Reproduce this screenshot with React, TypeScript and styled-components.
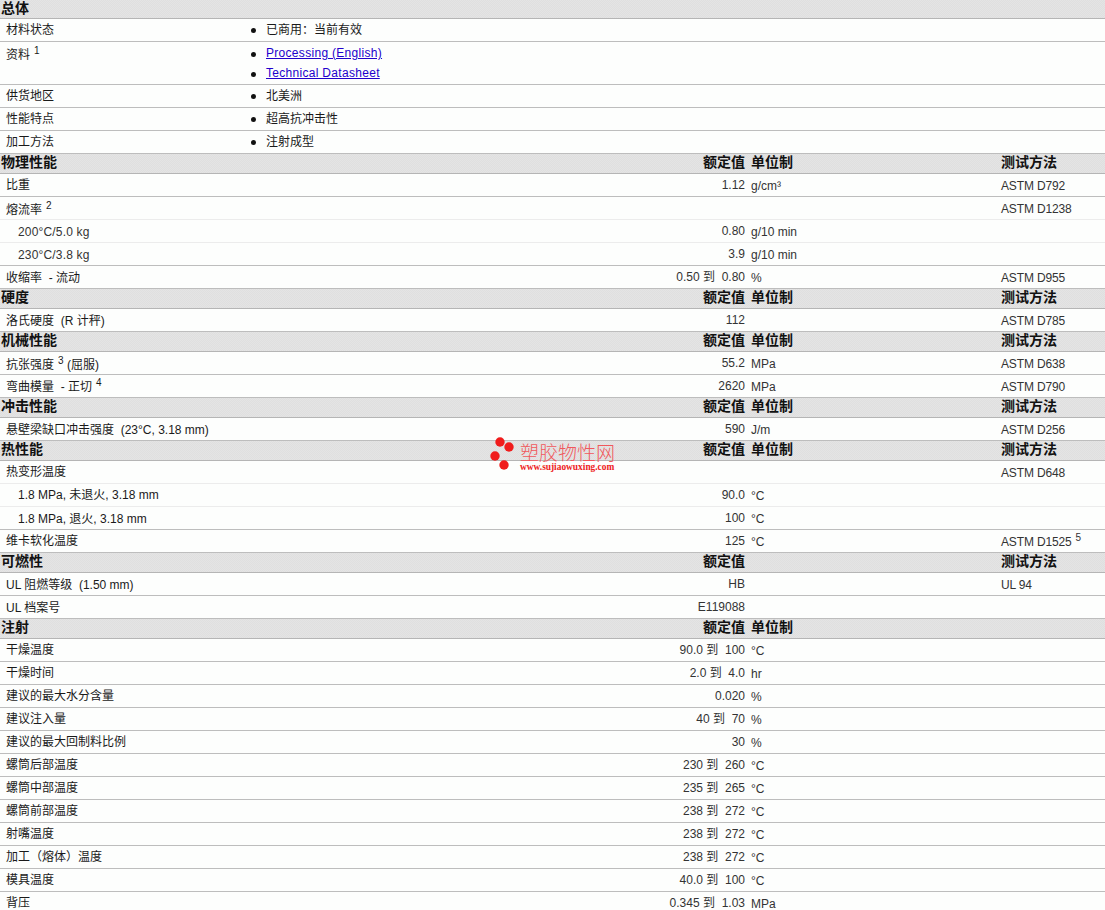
import styled, { createGlobalStyle } from "styled-components";

const GlobalStyle = createGlobalStyle`
  html, body {
    margin: 0;
    padding: 0;
    height: 910px;
    overflow: hidden;
    background: #fdfefd;
  }
`;

const Sheet = styled.div`
  position: relative;
  width: 1105px;
  font-family: "Liberation Sans", "Noto Sans CJK SC", sans-serif;
  font-size: 12px;
  color: #333;
`;

const HeadRow = styled.div<{ $short?: boolean }>`
  display: grid;
  grid-template-columns: 745px 250px 110px;
  box-sizing: border-box;
  height: ${({ $short }) => ($short ? "19px" : "20px")};
  padding-bottom: 3px;
  align-items: center;
  background-color: #e4e4e4;
  background-image: conic-gradient(#dfdfdf 25%, transparent 0 50%, #dfdfdf 0 75%, transparent 0);
  background-size: 2px 2px;
  border-bottom: 1px solid #b5b5b5;
  font-size: 14px;
  line-height: 16px;
  font-weight: 700;
  color: #111;
`;

const HeadTitle = styled.div`
  grid-column: 1;
  grid-row: 1;
  padding-left: 1px;
`;

const HeadValue = styled.div`
  grid-column: 1;
  grid-row: 1;
  text-align: right;
`;

const HeadUnit = styled.div`
  padding-left: 6px;
`;

const HeadTest = styled.div`
  padding-left: 6px;
`;

const Row = styled.div<{ $light?: boolean }>`
  display: grid;
  grid-template-columns: 745px 250px 110px;
  box-sizing: border-box;
  height: 23px;
  border-bottom: 1px solid ${({ $light }) => ($light ? "#ececec" : "#bdbdbd")};
`;

const Label = styled.div<{ $indent?: boolean; $drop?: number }>`
  grid-column: 1;
  grid-row: 1;
  padding-left: ${({ $indent }) => ($indent ? "18px" : "6px")};
  padding-top: ${({ $drop }) => $drop ?? 0}px;
  line-height: 23px;
  white-space: pre;
  color: #1a1a1a;
`;

const Wide = styled.span`
  letter-spacing: 0.17px;
  color: #333;
`;

const Value = styled.div`
  grid-column: 1;
  grid-row: 1;
  text-align: right;
  line-height: 23px;
  white-space: pre;
`;

const Unit = styled.div`
  padding-left: 6px;
  line-height: 24px;
`;

const Test = styled.div`
  padding-left: 6px;
  line-height: 24px;
  letter-spacing: -0.15px;
`;

const Sup = styled.sup`
  font-size: 10px;
  line-height: 0;
  margin-left: 4px;
  letter-spacing: 0;
`;

const InfoRow = styled.div<{ $tall?: boolean }>`
  display: grid;
  grid-template-columns: 245px 1fr;
  box-sizing: border-box;
  height: ${({ $tall }) => ($tall ? "43px" : "23px")};
  border-bottom: 1px solid #bdbdbd;
`;

const InfoLabel = styled.div<{ $drop?: number }>`
  padding-left: 6px;
  padding-top: ${({ $drop }) => $drop ?? 0}px;
  line-height: 23px;
  color: #1a1a1a;
`;

const InfoList = styled.ul`
  margin: 0;
  padding: 0;
  list-style: none;
`;

const InfoItem = styled.li<{ $link?: boolean }>`
  position: relative;
  height: 20px;
  padding-left: 21px;
  line-height: 23px;
  color: #1a1a1a;

  &::before {
    content: "";
    position: absolute;
    left: 6px;
    top: ${({ $link }) => ($link ? "10px" : "9px")};
    width: 5px;
    height: 5px;
    border-radius: 50%;
    background: #111;
  }
`;

const DocLink = styled.a`
  color: #2200cc;
  text-decoration: underline;
  letter-spacing: 0.3px;
`;

const Watermark = styled.div`
  position: absolute;
  left: 490px;
  top: 437px;
  width: 130px;
  height: 36px;
  display: flex;
  gap: 4px;
`;

const Brand = styled.div`
  display: flex;
  flex-direction: column;
  padding-top: 6px;
`;

const BrandName = styled.div`
  font-family: "Noto Sans CJK SC", sans-serif;
  font-size: 19px;
  line-height: 17px;
  margin-bottom: 2px;
  font-weight: 300;
  color: #f0585c;
`;

const BrandUrl = styled.div`
  font-family: "Liberation Serif", serif;
  font-size: 9.4px;
  line-height: 10px;
  font-weight: 700;
  color: #ee2222;
`;

type Item = {
  label: React.ReactNode;
  value?: string;
  unit?: React.ReactNode;
  test?: React.ReactNode;
  indent?: boolean;
  light?: boolean;
  drop?: number;
};
type Section = { title: string; unit?: boolean; test?: boolean; rows: Item[] };

const sections: Section[] = [
  {
    title: "物理性能", unit: true, test: true,
    rows: [
      { label: "比重", value: "1.12", unit: "g/cm³", test: "ASTM D792" },
      { label: <>熔流率<Sup>2</Sup></>, test: "ASTM D1238", light: true, drop: 2 },
      { label: <Wide>200°C/5.0 kg</Wide>, value: "0.80", unit: "g/10 min", indent: true, light: true, drop: 1 },
      { label: <Wide>230°C/3.8 kg</Wide>, value: "3.9", unit: "g/10 min", indent: true, drop: 1 },
      { label: "收缩率  - 流动", value: "0.50 到  0.80", unit: "%", test: "ASTM D955", drop: 1 },
    ],
  },
  {
    title: "硬度", unit: true, test: true,
    rows: [{ label: "洛氏硬度  (R 计秤)", value: "112", test: "ASTM D785", drop: 1 }],
  },
  {
    title: "机械性能", unit: true, test: true,
    rows: [
      { label: <>抗张强度<Sup>3</Sup> (屈服)</>, value: "55.2", unit: "MPa", test: "ASTM D638", drop: 2 },
      { label: <>弯曲模量  - 正切<Sup>4</Sup></>, value: "2620", unit: "MPa", test: "ASTM D790", drop: 1 },
    ],
  },
  {
    title: "冲击性能", unit: true, test: true,
    rows: [{ label: "悬壁梁缺口冲击强度  (23°C, 3.18 mm)", value: "590", unit: "J/m", test: "ASTM D256", drop: 1 }],
  },
  {
    title: "热性能", unit: true, test: true,
    rows: [
      { label: "热变形温度", test: "ASTM D648", light: true },
      { label: "1.8 MPa, 未退火, 3.18 mm", value: "90.0", unit: "°C", indent: true, light: true },
      { label: "1.8 MPa, 退火, 3.18 mm", value: "100", unit: "°C", indent: true, drop: 1 },
      { label: "维卡软化温度", value: "125", unit: "°C", test: <>ASTM D1525<Sup>5</Sup></> },
    ],
  },
  {
    title: "可燃性", test: true,
    rows: [
      { label: "UL 阻燃等级  (1.50 mm)", value: "HB", test: "UL 94", drop: 1 },
      { label: "UL 档案号", value: "E119088", drop: 1 },
    ],
  },
  {
    title: "注射", unit: true,
    rows: [
      { label: "干燥温度", value: "90.0 到  100", unit: "°C" },
      { label: "干燥时间", value: "2.0 到  4.0", unit: "hr" },
      { label: "建议的最大水分含量", value: "0.020", unit: "%" },
      { label: "建议注入量", value: "40 到  70", unit: "%" },
      { label: "建议的最大回制料比例", value: "30", unit: "%" },
      { label: "螺筒后部温度", value: "230 到  260", unit: "°C" },
      { label: "螺筒中部温度", value: "235 到  265", unit: "°C" },
      { label: "螺筒前部温度", value: "238 到  272", unit: "°C" },
      { label: "射嘴温度", value: "238 到  272", unit: "°C" },
      { label: "加工（熔体）温度", value: "238 到  272", unit: "°C" },
      { label: "模具温度", value: "40.0 到  100", unit: "°C" },
      { label: "背压", value: "0.345 到  1.03", unit: "MPa" },
    ],
  },
];

const App = () => {
  return (
    <Sheet>
      <GlobalStyle />
      <HeadRow $short>
        <HeadTitle>总体</HeadTitle>
      </HeadRow>
      <InfoRow>
        <InfoLabel>材料状态</InfoLabel>
        <InfoList><InfoItem>已商用：当前有效</InfoItem></InfoList>
      </InfoRow>
      <InfoRow $tall>
        <InfoLabel $drop={2}>资料<Sup>1</Sup></InfoLabel>
        <InfoList>
          <InfoItem $link><DocLink href="#processing">Processing (English)</DocLink></InfoItem>
          <InfoItem $link><DocLink href="#datasheet">Technical Datasheet</DocLink></InfoItem>
        </InfoList>
      </InfoRow>
      <InfoRow>
        <InfoLabel>供货地区</InfoLabel>
        <InfoList><InfoItem>北美洲</InfoItem></InfoList>
      </InfoRow>
      <InfoRow>
        <InfoLabel>性能特点</InfoLabel>
        <InfoList><InfoItem>超高抗冲击性</InfoItem></InfoList>
      </InfoRow>
      <InfoRow>
        <InfoLabel>加工方法</InfoLabel>
        <InfoList><InfoItem>注射成型</InfoItem></InfoList>
      </InfoRow>
      {sections.map((s) => (
        <div key={s.title}>
          <HeadRow>
            <HeadTitle>{s.title}</HeadTitle>
            <HeadValue>额定值</HeadValue>
            <HeadUnit>{s.unit ? "单位制" : ""}</HeadUnit>
            <HeadTest>{s.test ? "测试方法" : ""}</HeadTest>
          </HeadRow>
          {s.rows.map((r, i) => (
            <Row key={i} $light={r.light}>
              <Label $indent={r.indent} $drop={r.drop}>{r.label}</Label>
              <Value>{r.value}</Value>
              <Unit>{r.unit}</Unit>
              <Test>{r.test}</Test>
            </Row>
          ))}
        </div>
      ))}
      <Watermark>
        <svg width="26" height="34" viewBox="0 0 26 34">
          <circle cx="10" cy="5" r="4.7" fill="#f01c1c" />
          <circle cx="19" cy="10" r="4.7" fill="#f01c1c" />
          <circle cx="5" cy="19" r="4.7" fill="#f01c1c" />
          <circle cx="14" cy="28" r="4.7" fill="#f01c1c" />
        </svg>
        <Brand>
          <BrandName>塑胶物性网</BrandName>
          <BrandUrl>www.sujiaowuxing.com</BrandUrl>
        </Brand>
      </Watermark>
    </Sheet>
  );
};

export default App;
